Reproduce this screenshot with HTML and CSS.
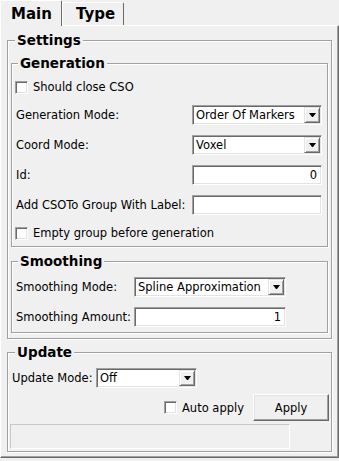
FILE: index.html
```html
<!DOCTYPE html>
<html lang="en">
<head>
  <meta charset="UTF-8" />
  <title>CSO Generator</title>
  <link rel="stylesheet" href="styles.css">
</head>
<body>

  <div class="tabs">
    <div class="tab active">Main</div>
    <div class="tab">Type</div>
  </div>

  <div class="panel">
    <fieldset class="group settings">
      <legend>Settings</legend>

      <fieldset class="group inner">
        <legend>Generation</legend>
        <div class="check-row"><span class="box"></span><span>Should close CSO</span></div>
        <div class="row">
          <span class="lbl">Generation Mode:</span>
          <div class="field combo gen-w"><span>Order Of Markers</span><i class="drop"></i></div>
        </div>
        <div class="row">
          <span class="lbl">Coord Mode:</span>
          <div class="field combo gen-w"><span>Voxel</span><i class="drop"></i></div>
        </div>
        <div class="row">
          <span class="lbl">Id:</span>
          <div class="field num gen-w">0</div>
        </div>
        <div class="row">
          <span class="lbl">Add CSOTo Group With Label:</span>
          <div class="field gen-w"></div>
        </div>
        <div class="check-row gap"><span class="box"></span><span>Empty group before generation</span></div>
      </fieldset>

      <fieldset class="group inner smoothing">
        <legend>Smoothing</legend>
        <div class="grid-row">
          <span class="lbl">Smoothing Mode:</span>
          <div class="field combo smooth-w"><span>Spline Approximation</span><i class="drop"></i></div>
        </div>
        <div class="grid-row">
          <span class="lbl">Smoothing Amount:</span>
          <div class="field num smooth-w">1</div>
        </div>
      </fieldset>
    </fieldset>

    <fieldset class="group update">
      <legend>Update</legend>
      <div class="update-row">
        <span class="lbl">Update Mode:</span>
        <div class="field combo update-w"><span>Off</span><i class="drop"></i></div>
      </div>
      <div class="apply-row">
        <span class="box"></span><span class="auto">Auto apply</span>
        <div class="button">Apply</div>
      </div>
      <div class="status"></div>
    </fieldset>
  </div>

</body>
</html>
```

FILE: styles.css
```css
* {
  box-sizing: border-box;
}

body {
  margin: 0;
  width: 339px;
  height: 461px;
  overflow: hidden;
  background-color: #f0f0f0;
  color: #000;
  font-family: "DejaVu Sans", Verdana, sans-serif;
  font-size: 11.5px;
}

/* tabs */
.tabs {
  display: flex;
  align-items: flex-end;
  height: 25px;
}

.tab {
  width: 62px;
  height: 23px;
  padding: 3px 0 2px 13px;
  font-size: 15px;
  font-weight: bold;
  line-height: 17px;
  border-top: 1px solid #fff;
  border-left: 1px solid #fff;
  border-right: 1px solid #696969;
  border-top-right-radius: 2px;
}

.tab.active {
  height: 26px;
  padding-top: 5px;
  padding-left: 10px;
  margin-bottom: -1px;
  position: relative;
  z-index: 1;
  background-color: #f0f0f0;
}

.panel {
  height: 433px;
  padding: 0 6px;
  border-top: 1px solid #fff;
  border-left: 1px solid #fff;
  border-right: 1px solid #696969;
  border-bottom: 1px solid #696969;
  box-shadow: inset -1px -1px 0 #a0a0a0;
}

/* group boxes */
.group {
  margin: 0;
  min-width: 0;
  border: 1px solid #a0a0a0;
  box-shadow: inset 1px 1px 0 #fff, 1px 1px 0 #fff;
}

.group legend {
  margin-left: 4px;
  padding: 0 2px;
  font-size: 13.5px;
  font-weight: bold;
  line-height: 15px;
  background-color: #f0f0f0;
}

.settings {
  margin-top: 7px;
  padding: 0 3px 5px 3px;
}

.inner {
  margin-top: 8px;
  padding: 6px 5px 3px 2px;
}

.smoothing {
  margin-top: 7px;
  padding: 8px 5px 5px 2px;
}

.update {
  margin-top: 6px;
  padding: 8px 2px 2px 2px;
}

.update legend {
  margin-left: 5px;
}

/* rows */
.lbl {
  margin-left: 2px;
  white-space: nowrap;
}

.row {
  display: flex;
  align-items: center;
  justify-content: space-between;
  height: 20px;
  margin-top: 10px;
}

.check-row {
  display: flex;
  align-items: center;
  gap: 5px;
  height: 20px;
  padding-left: 1px;
}

.check-row.gap {
  margin-top: 8px;
}

.check-row + .row {
  margin-top: 8px;
}

.grid-row {
  display: grid;
  grid-template-columns: 120px auto;
  align-items: center;
  height: 20px;
}

.grid-row + .grid-row {
  margin-top: 10px;
}

.update-row {
  display: grid;
  grid-template-columns: 86px auto;
  align-items: center;
  height: 20px;
}

.apply-row {
  display: flex;
  align-items: center;
  justify-content: flex-end;
  height: 27px;
  margin-top: 6px;
}

.auto {
  margin-left: 5px;
}

/* controls */
.box {
  width: 13px;
  height: 13px;
  background-color: #fff;
  border: 1px solid;
  border-color: #a0a0a0 #fff #fff #a0a0a0;
  box-shadow: inset 1px 1px 0 #696969, inset -1px -1px 0 #e3e3e3;
}

.field {
  display: flex;
  align-items: center;
  height: 20px;
  padding: 0 2px 0 3px;
  background-color: #fff;
  border: 1px solid;
  border-color: #a0a0a0 #fff #fff #a0a0a0;
  box-shadow: inset 1px 1px 0 #696969, inset -1px -1px 0 #e3e3e3;
  white-space: nowrap;
}

.field.combo {
  padding-right: 1px;
}

.field.num {
  justify-content: flex-end;
  padding-right: 4px;
}

.gen-w {
  width: 130px;
}

.smooth-w {
  width: 152px;
}

.update-w {
  width: 101px;
}

.drop {
  display: flex;
  align-items: center;
  justify-content: center;
  width: 16px;
  height: 16px;
  margin-left: auto;
  background-color: #f0f0f0;
  border: 1px solid;
  border-color: #e3e3e3 #696969 #696969 #e3e3e3;
  box-shadow: inset 1px 1px 0 #fff, inset -1px -1px 0 #a0a0a0;
}

.drop::after {
  content: "";
  width: 1px;
  height: 0;
  border-top: 4px solid #000;
  border-left: 3px solid transparent;
  border-right: 3px solid transparent;
}

.button {
  display: flex;
  align-items: center;
  justify-content: center;
  width: 76px;
  height: 27px;
  margin-left: 9px;
  border: 1px solid;
  border-color: #fff #696969 #696969 #fff;
  box-shadow: inset -1px -1px 0 #a0a0a0, inset 1px 1px 0 #e3e3e3;
}

.status {
  width: 280px;
  height: 25px;
  margin-top: 3px;
  border: 1px solid;
  border-color: #c8c8c8 #fff #fff #c8c8c8;
}
```
